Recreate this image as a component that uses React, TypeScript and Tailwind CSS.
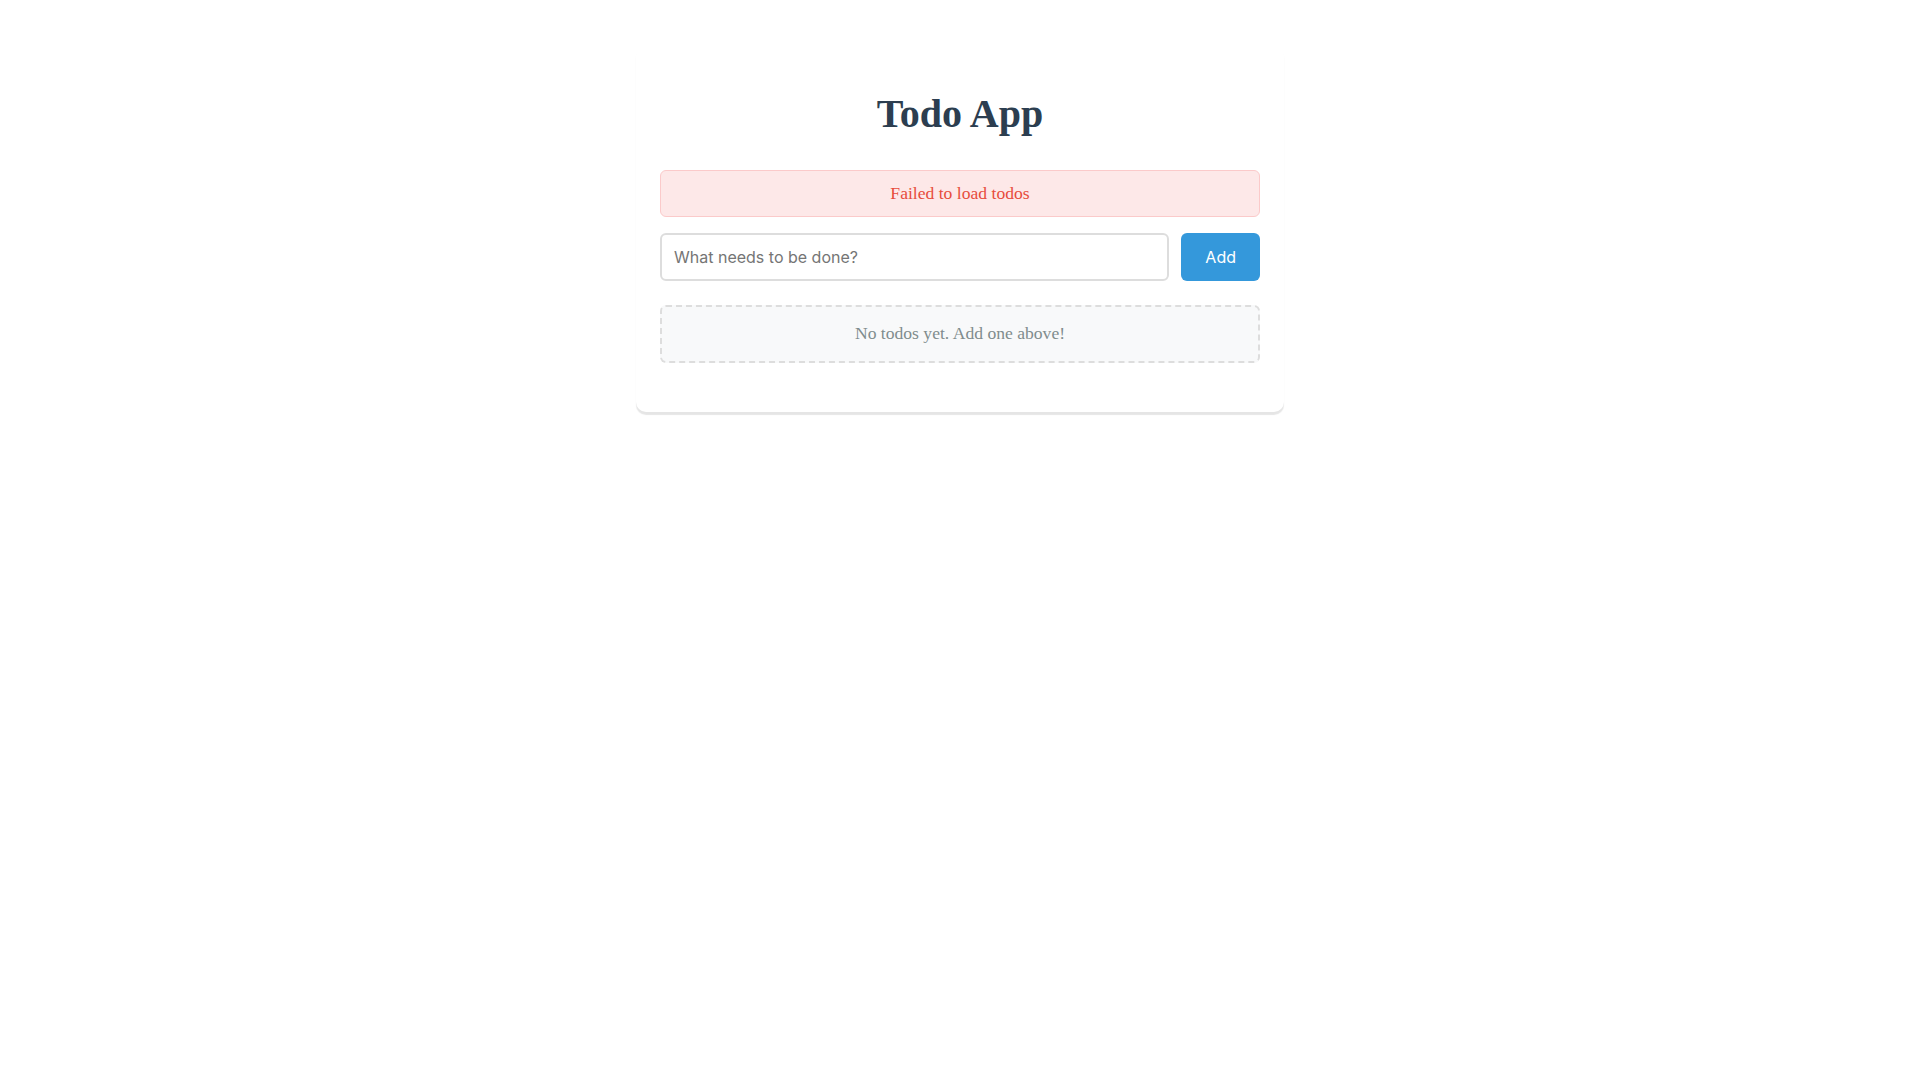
import { useState } from 'react';

export default function App() {
  const [text, setText] = useState('');
  const [error] = useState('Failed to load todos');
  const todos: string[] = [];

  return (
    <div className="min-h-screen bg-white pt-[46px]" style={{ fontFamily: '"Liberation Serif", "Times New Roman", serif' }}>
      <div className="mx-auto w-[648px] rounded-[10px] bg-white px-6 pt-6 pb-[25px] shadow-[0_3px_1px_rgba(0,0,0,0.1)]">
        <h1 className="mt-[21px] mb-[33px] text-center text-[40px] font-bold leading-[1.15] text-[#2c3e50]">Todo App</h1>

        {error && (
          <div className="mb-4 rounded-[6px] border border-[#fbcaca] bg-[#fde8e8] px-3 py-3 text-center text-[17.6px] leading-[1.2] text-[#e74c3c]">
            {error}
          </div>
        )}

        <form className="flex gap-3" onSubmit={(e) => e.preventDefault()}>
          <input
            value={text}
            onChange={(e) => setText(e.target.value)}
            placeholder="What needs to be done?"
            className="flex-1 rounded-[6px] border-2 border-[#ddd] px-3 py-3 text-[16px] leading-[20px] text-[#333] outline-none placeholder:text-[#757575]"
            style={{ fontFamily: 'Inter, sans-serif' }}
          />
          <button
            type="submit"
            className="rounded-[6px] bg-[#3498db] px-6 py-3 text-[16px] leading-[20px] text-white"
            style={{ fontFamily: 'Inter, sans-serif' }}
          >
            Add
          </button>
        </form>

        {todos.length === 0 && (
          <div className="my-6 rounded-[6px] border-2 border-dashed border-[#ddd] bg-[#f8f9fa] px-4 py-4 text-center text-[17.6px] leading-[1.25] text-[#7f8c8d]">
            No todos yet. Add one above!
          </div>
        )}
      </div>
    </div>
  );
}
